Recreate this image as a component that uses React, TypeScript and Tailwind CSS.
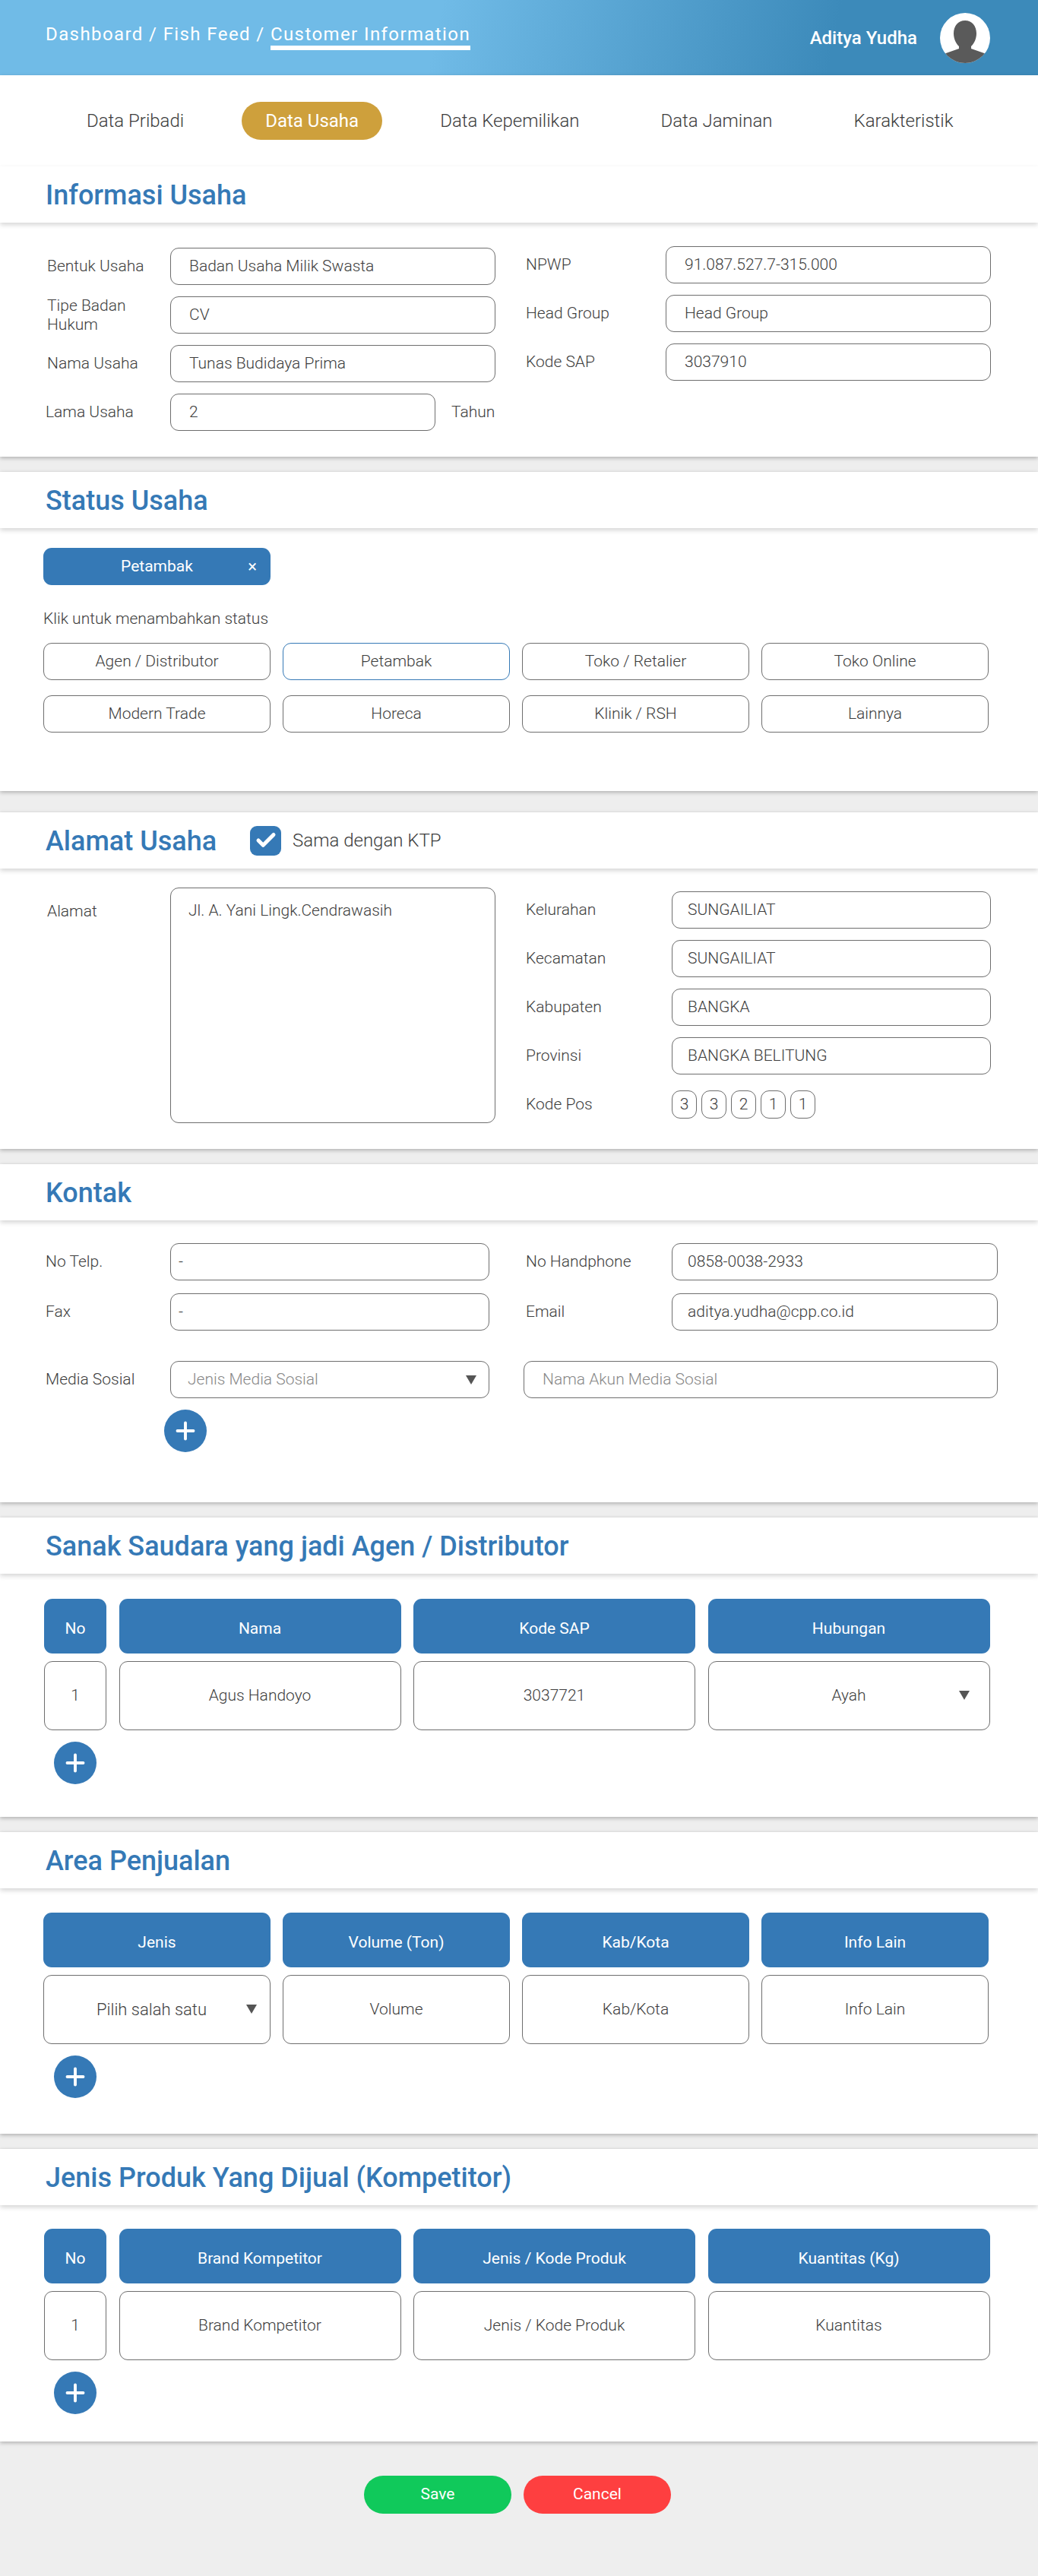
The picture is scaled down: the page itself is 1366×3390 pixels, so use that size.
import type { ReactNode } from 'react'
import { Plus, Check } from 'lucide-react'

const box = 'rounded-[11px] border border-[#6e6e6e] bg-white'

function Field({ value, className = '', pad = 'pl-[24px]' }: { value: string; className?: string; pad?: string }) {
  return <div className={`${box} flex h-[49px] items-center ${pad} ${className}`}>{value}</div>
}

function Row({ label, value, labelW, inputW, pad }: { label: string; value: string; labelW: number; inputW: number; pad?: string }) {
  return (
    <div className="flex h-[49px] items-center">
      <div className="shrink-0 leading-[25px]" style={{ width: labelW }}>{label}</div>
      <div style={{ width: inputW }}>
        <Field value={value} pad={pad} />
      </div>
    </div>
  )
}

function Arrow({ className = '' }: { className?: string }) {
  return (
    <svg viewBox="0 0 14 12" className={`h-[12px] w-[14px] fill-[#555] ${className}`}>
      <path d="M0 0h14L7 12z" />
    </svg>
  )
}

function AddButton({ className = '' }: { className?: string }) {
  return (
    <div className={`flex h-[56px] w-[56px] items-center justify-center rounded-full bg-[#3579b6] ${className}`}>
      <Plus size={36} strokeWidth={2.6} color="#fff" />
    </div>
  )
}

function SectionHead({ children }: { children: ReactNode }) {
  return (
    <div className="relative flex h-[74px] items-center gap-[44px] pl-[60px] shadow-[0_3px_6px_rgba(0,0,0,0.16)]">
      {children}
    </div>
  )
}

function Title({ children }: { children: ReactNode }) {
  return <h2 className="pt-[2px] text-[36px] font-medium text-[#3579b6]">{children}</h2>
}

function Section({ title, children, className = 'mb-[20px]' }: { title: string; children: ReactNode; className?: string }) {
  return (
    <section className={`bg-white shadow-[0_2px_5px_rgba(0,0,0,0.25)] ${className}`}>
      <SectionHead>
        <Title>{title}</Title>
      </SectionHead>
      {children}
    </section>
  )
}

function Cells({ cols, cells, head }: { cols: string; cells: ReactNode[]; head?: boolean }) {
  return (
    <div className={`grid ${cols} ${head ? 'h-[72px]' : 'mt-[10px] h-[91px]'}`}>
      {cells.map((c, i) =>
        head ? (
          <div key={i} className="flex items-center justify-center rounded-[11px] bg-[#3579b6] pt-[7px] font-normal text-white">
            {c}
          </div>
        ) : (
          <div key={i} className={`${box} relative flex items-center justify-center`}>
            {c}
          </div>
        ),
      )}
    </div>
  )
}

const fourCols = 'grid-cols-4 gap-x-[16px]'
const noCols = 'grid-cols-[82px_371px_371px_371px] gap-x-[16.5px]'
const statuses = ['Agen / Distributor', 'Petambak', 'Toko / Retalier', 'Toko Online', 'Modern Trade', 'Horeca', 'Klinik / RSH', 'Lainnya']
const tabs = ['Data Pribadi', 'Data Usaha', 'Data Kepemilikan', 'Data Jaminan', 'Karakteristik']

export default function App() {
  return (
    <div className="min-h-[3390px] bg-[#eeeeee] text-[21px] font-light text-[#3d3d3d] [font-family:Roboto,sans-serif]">
      <header className="flex h-[99px] items-center justify-between bg-[linear-gradient(102deg,#70bbe7_0%,#70bbe7_42%,#3c8aba_80%,#3c8aba_100%)] pl-[60px] pr-[63px]">
        <div className="relative -top-[5px] text-[24px] font-normal tracking-[1.4px] text-white">
          Dashboard / Fish Feed / <span className="border-b-[6px] border-white pb-[1px]">Customer Information</span>
        </div>
        <div className="flex items-center gap-[30px]">
          <span className="text-[24px] font-medium text-white">Aditya Yudha</span>
          <svg viewBox="0 0 66 66" className="h-[66px] w-[66px]">
            <circle cx="33" cy="33" r="33" fill="#fff" />
            <clipPath id="avatar-clip">
              <circle cx="33" cy="33" r="33" />
            </clipPath>
            <g clipPath="url(#avatar-clip)" fill="#5a5a5a">
              <path d="M33 10c9 0 15 7 15 17 0 7-3 13-7 17v3l20 7v14H5V54l20-7v-3c-4-4-7-10-7-17 0-10 6-17 15-17z" />
            </g>
          </svg>
        </div>
      </header>

      <section className="mb-[20px] bg-white shadow-[0_2px_5px_rgba(0,0,0,0.25)]">
        <nav className="flex gap-[45px] pl-[83px] pt-[35px] text-[24px]">
          {tabs.map((t) => (
            <div
              key={t}
              className={`flex h-[50px] items-center rounded-full px-[31px] ${t === 'Data Usaha' ? 'bg-[#cea03c] font-normal text-white' : ''}`}
            >
              {t}
            </div>
          ))}
        </nav>
        <div className="mt-[35px]">
          <SectionHead>
            <Title>Informasi Usaha</Title>
          </SectionHead>
        </div>
        <div className="flex h-[308px] pl-[62px] pt-[31px]">
          <div className="flex w-[590px] flex-col gap-[15px] pt-[2px]">
            <Row label="Bentuk Usaha" value="Badan Usaha Milik Swasta" labelW={162} inputW={428} />
            <Row label="Tipe Badan Hukum" value="CV" labelW={162} inputW={428} />
            <Row label="Nama Usaha" value="Tunas Budidaya Prima" labelW={162} inputW={428} />
            <div className="-ml-[2px] flex h-[49px] items-center">
              <div className="w-[164px] shrink-0">Lama Usaha</div>
              <Field value="2" className="w-[349px]" />
              <div className="ml-[21px]">Tahun</div>
            </div>
          </div>
          <div className="ml-[40px] flex flex-col gap-[15px]">
            <Row label="NPWP" value="91.087.527.7-315.000" labelW={184} inputW={428} />
            <Row label="Head Group" value="Head Group" labelW={184} inputW={428} />
            <Row label="Kode SAP" value="3037910" labelW={184} inputW={428} />
          </div>
        </div>
      </section>

      <Section title="Status Usaha" className="mb-[28px]">
        <div className="h-[346px] px-[57px] pt-[26px]">
          <div className="relative flex h-[49px] w-[299px] items-center justify-center rounded-[11px] bg-[#3579b6] font-normal text-white">
            Petambak
            <span className="absolute right-[18px] top-[11px] text-[22px] leading-[28px]">×</span>
          </div>
          <div className="mt-[31px] h-[26px] leading-[26px]">Klik untuk menambahkan status</div>
          <div className="mt-[19px] grid w-[1244px] grid-cols-4 gap-x-[16px] gap-y-[20px]">
            {statuses.map((s) => (
              <div
                key={s}
                className={`flex h-[49px] items-center justify-center rounded-[11px] border ${s === 'Petambak' ? 'border-[#3579b6]' : 'border-[#6e6e6e]'}`}
              >
                {s}
              </div>
            ))}
          </div>
        </div>
      </Section>

      <section className="mb-[20px] bg-white shadow-[0_2px_5px_rgba(0,0,0,0.25)]">
        <SectionHead>
          <Title>Alamat Usaha</Title>
          <div className="flex items-center gap-[15px]">
            <div className="flex h-[39px] w-[41px] items-center justify-center rounded-[9px] bg-[#3579b6]">
              <Check size={30} strokeWidth={4} color="#fff" />
            </div>
            <span className="text-[24px]">Sama dengan KTP</span>
          </div>
        </SectionHead>
        <div className="flex h-[369px] pl-[62px] pt-[25px]">
          <div className="w-[162px] pt-[16px]">Alamat</div>
          <div className={`${box} h-[310px] w-[428px] pl-[23px] pt-[14px]`}>Jl. A. Yani Lingk.Cendrawasih</div>
          <div className="ml-[40px] flex flex-col gap-[15px] pt-[5px]">
            <Row label="Kelurahan" value="SUNGAILIAT" labelW={192} inputW={420} pad="pl-[20px]" />
            <Row label="Kecamatan" value="SUNGAILIAT" labelW={192} inputW={420} pad="pl-[20px]" />
            <Row label="Kabupaten" value="BANGKA" labelW={192} inputW={420} pad="pl-[20px]" />
            <Row label="Provinsi" value="BANGKA BELITUNG" labelW={192} inputW={420} pad="pl-[20px]" />
            <div className="mt-[6px] flex items-center">
              <div className="w-[192px] shrink-0">Kode Pos</div>
              <div className="flex gap-[6px]">
                {['3', '3', '2', '1', '1'].map((d, i) => (
                  <div key={i} className="flex h-[37px] w-[33px] items-center justify-center rounded-[11px] border border-[#6e6e6e]">
                    {d}
                  </div>
                ))}
              </div>
            </div>
          </div>
        </div>
      </section>

      <Section title="Kontak">
        <div className="h-[371px] pl-[60px] pt-[30px]">
          <div className="flex">
            <div className="flex w-[584px] flex-col gap-[17px]">
              <Row label="No Telp." value="-" labelW={164} inputW={420} pad="pl-[10px]" />
              <Row label="Fax" value="-" labelW={164} inputW={420} pad="pl-[10px]" />
            </div>
            <div className="ml-[48px] flex flex-col gap-[17px]">
              <Row label="No Handphone" value="0858-0038-2933" labelW={192} inputW={429} pad="pl-[20px]" />
              <Row label="Email" value="aditya.yudha@cpp.co.id" labelW={192} inputW={429} pad="pl-[20px]" />
            </div>
          </div>
          <div className="mt-[40px] flex h-[49px] items-center">
            <div className="w-[164px] shrink-0">Media Sosial</div>
            <div className={`${box} flex h-[49px] w-[420px] items-center justify-between pl-[22px] pr-[16px] text-[#888]`}>
              Jenis Media Sosial
              <Arrow />
            </div>
            <Field value="Nama Akun Media Sosial" className="ml-[45px] w-[624px] text-[#888]" />
          </div>
          <AddButton className="ml-[156px] mt-[15px]" />
        </div>
      </Section>

      <Section title="Sanak Saudara yang jadi Agen / Distributor">
        <div className="h-[320px] pl-[58px] pt-[33px]">
          <Cells head cols={noCols} cells={['No', 'Nama', 'Kode SAP', 'Hubungan']} />
          <Cells
            cols={noCols}
            cells={[
              '1',
              'Agus Handoyo',
              '3037721',
              <>
                Ayah
                <Arrow className="absolute right-[26px] top-[38px]" />
              </>,
            ]}
          />
          <AddButton className="ml-[13px] mt-[15px]" />
        </div>
      </Section>

      <Section title="Area Penjualan">
        <div className="h-[323px] w-[1301px] pl-[57px] pt-[32px]">
          <Cells head cols={fourCols} cells={['Jenis', 'Volume (Ton)', 'Kab/Kota', 'Info Lain']} />
          <Cells
            cols={fourCols}
            cells={[
              <>
                <span className="-ml-[14px] text-[22px]">Pilih salah satu</span>
                <Arrow className="absolute right-[17px] top-[38px]" />
              </>,
              'Volume',
              'Kab/Kota',
              'Info Lain',
            ]}
          />
          <AddButton className="ml-[14px] mt-[15px]" />
        </div>
      </Section>

      <Section title="Jenis Produk Yang Dijual (Kompetitor)">
        <div className="h-[311px] pl-[58px] pt-[31px]">
          <Cells head cols={noCols} cells={['No', 'Brand Kompetitor', 'Jenis / Kode Produk', 'Kuantitas (Kg)']} />
          <Cells cols={noCols} cells={['1', 'Brand Kompetitor', 'Jenis / Kode Produk', 'Kuantitas']} />
          <AddButton className="ml-[13px] mt-[15px]" />
        </div>
      </Section>

      <div className="flex justify-center gap-[16px] pr-[4px] pt-[25px]">
        <button className="h-[50px] w-[194px] rounded-full bg-[#10c95b] font-normal text-white">Save</button>
        <button className="h-[50px] w-[194px] rounded-full bg-[#fe3f40] font-normal text-white">Cancel</button>
      </div>
    </div>
  )
}
